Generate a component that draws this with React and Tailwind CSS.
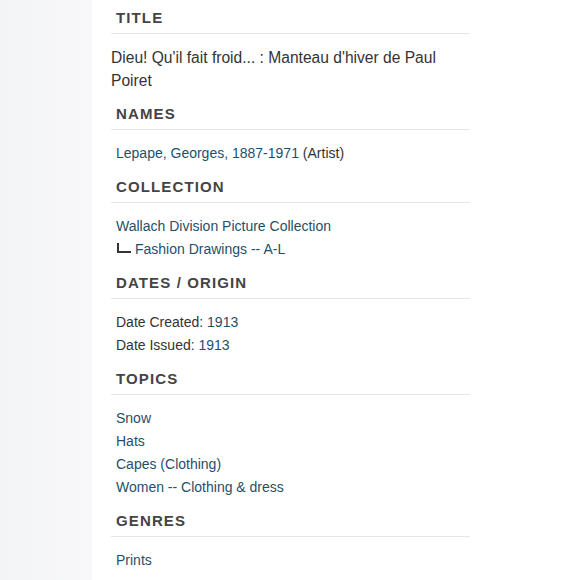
import React from 'react';

const link = 'text-[#1f4f6b]';

const sections = [
  {
    heading: 'Names',
    items: [
      <>
        <span className={link}>Lepape, Georges, 1887-1971</span> (Artist)
      </>,
    ],
  },
  {
    heading: 'Collection',
    items: [
      <span className={link}>Wallach Division Picture Collection</span>,
      <span className="flex items-center">
        <span className="ml-[1px] mr-[4px] -mt-[3px] inline-block h-[10px] w-[14px] border-b-2 border-l-2 border-[#333]"></span>
        <span className={link}>Fashion Drawings -- A-L</span>
      </span>,
    ],
  },
  {
    heading: 'Dates / Origin',
    items: [
      <>
        Date Created: <span className={link}>1913</span>
      </>,
      <>
        Date Issued: <span className={link}>1913</span>
      </>,
    ],
  },
  {
    heading: 'Topics',
    items: [
      <span className={link}>Snow</span>,
      <span className={link}>Hats</span>,
      <span className={link}>Capes (Clothing)</span>,
      <span className={link}>Women -- Clothing &amp; dress</span>,
    ],
  },
  {
    heading: 'Genres',
    items: [<span className={link}>Prints</span>],
  },
];

const Heading = ({ children }) => (
  <h2 className="border-b border-[#e6e6e6] px-[5px] pt-[1px] pb-[3px] text-[15px] font-bold uppercase leading-6 tracking-[0.075em] text-[#444]">
    {children}
  </h2>
);

export default function App() {
  return (
    <div className="flex h-[580px] w-[580px] overflow-hidden bg-white font-['Liberation_Sans',Arial,sans-serif]">
      <div className="w-[92px] shrink-0 bg-gradient-to-r from-[#f3f4f6] to-[#f8f8fa]"></div>
      <div className="w-[378px] shrink-0 pl-[19px] pt-[5px]">
        {/* Title */}
        <section>
          <Heading>Title</Heading>
          <p className="pt-[12px] text-[15.6px] leading-[23px] text-[#333]">
            Dieu! Qu'il fait froid... : Manteau d'hiver de Paul Poiret
          </p>
        </section>

        {sections.map((s) => (
          <section key={s.heading} className="mt-[9px]">
            <Heading>{s.heading}</Heading>
            <ul className="px-[5px] pt-[12px] text-[14px] leading-[23px] text-[#333]">
              {s.items.map((it, i) => (
                <li key={i}>{it}</li>
              ))}
            </ul>
          </section>
        ))}
      </div>
      <div className="flex-1 bg-white"></div>
    </div>
  );
}
